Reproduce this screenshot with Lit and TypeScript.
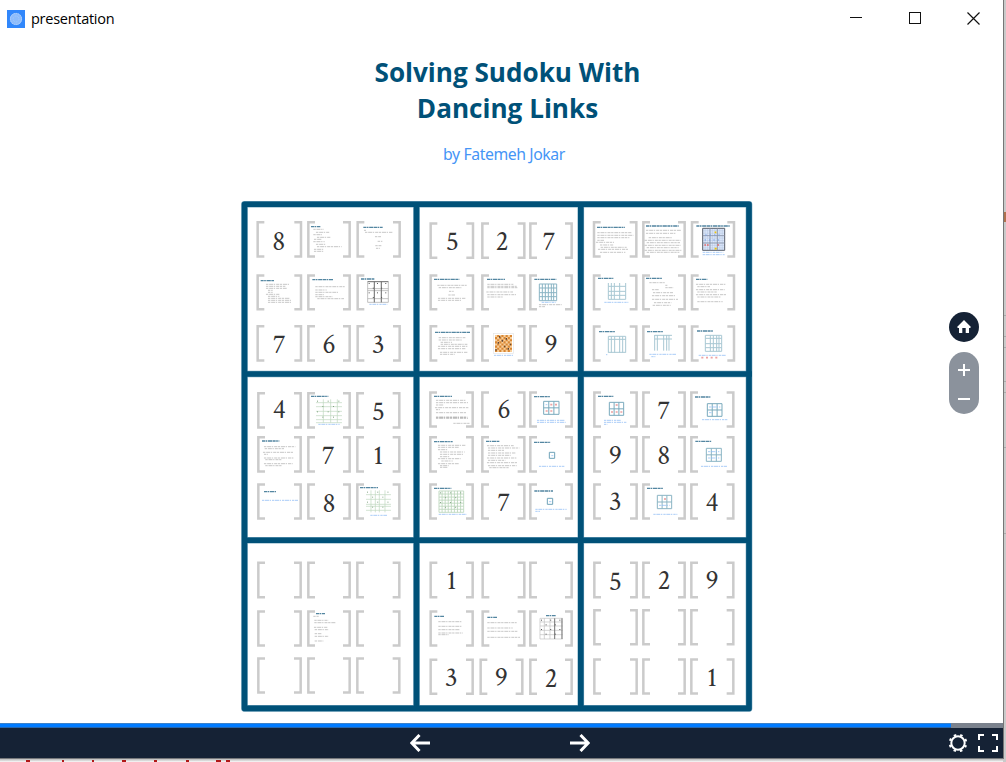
import { LitElement, html, svg, css } from "lit";
import { customElement, property } from "lit/decorators.js";

// Board geometry is expressed in thirds of a pixel, relative to each block's origin.
type Run = [number, number, number];
interface Mesh { x: number; y: number; w: number; h: number; cols: number; rows: number; color: string; bg?: string; sw?: number; vs?: number[]; hs?: number[]; dark?: string; }
interface Slide {
  digit?: [string, number, number];
  title?: Run;
  lines?: Run[];
  notes?: Run[];
  red?: Run[];
  mesh?: Mesh;
  marks?: string;
  chess?: [number, number, number];
}
interface Cell { x: number; y: number; w: number; h: number; s: Slide; }
interface Block { ox: number; oy: number; cells: Cell[]; }

const d = (n: string, x: number, y: number): Slide => ({ digit: [n, x, y] });
const E: Slide = {};
const TEAL = "#a9c8d3";
const GREEN = "#bcd6bc";

const cells = (cols: number[][], rows: number[][], slides: Slide[]): Cell[] =>
  slides.map((s, i) => {
    const [x0, x1] = cols[i % 3];
    const [y0, y1] = rows[Math.floor(i / 3)];
    return { x: x0, y: y0, w: x1 - x0, h: y1 - y0, s };
  });

const BLOCKS: Block[] = [
  { ox: 236, oy: 196, cells: cells([[61, 199], [213, 345], [361, 495]], [[75, 185], [235, 343], [387, 497]], [
    d("8", 128, 162),
    { title: [225, 92, 28], lines: [[232, 100, 32], [240, 109, 40], [232, 116, 26], [243, 124, 42], [234, 130, 24], [232, 137, 34], [240, 145, 30], [243, 152, 74], [234, 160, 30], [234, 166, 28]] },
    { title: [382, 94, 58], lines: [[384, 103, 6], [387, 109, 84], [417, 122, 18], [425, 136, 14], [418, 149, 18], [420, 157, 12]] },
    { title: [74, 254, 40], lines: [[90, 265, 72], [90, 271, 58], [90, 277, 62], [96, 283, 14], [96, 289, 14], [90, 295, 42], [96, 301, 34], [96, 307, 66], [96, 313, 72], [96, 319, 72]] },
    { title: [229, 251, 62], lines: [[238, 272, 88], [238, 282, 34], [238, 289, 68], [238, 296, 26], [238, 302, 52], [244, 308, 80]] },
    { title: [375, 249, 40], mesh: { x: 395, y: 257, w: 62, h: 62, cols: 3, rows: 3, color: "#b4b4b4", sw: 2.5, vs: [395, 415, 436, 457], hs: [257, 278, 284, 308, 319], dark: "M415 257v62M436 257v62M395 257h62" }, marks: "#555", notes: [[400, 325, 54]] },
    d("7", 130, 470), d("6", 279, 470), d("3", 427, 470),
  ]) },
  { ox: 410, oy: 196, cells: cells([[58, 193], [213, 347], [357, 489]], [[79, 189], [235, 343], [387, 497]], [
    d("5", 127, 163), d("2", 276, 162), d("7", 417, 162),
    { title: [72, 250, 76], lines: [[82, 268, 88], [86, 275, 68], [117, 286, 14], [115, 297, 20], [84, 307, 84], [84, 313, 70]] },
    { title: [231, 250, 54], lines: [[232, 265, 78], [232, 271, 88], [232, 275, 90], [229, 288, 80], [232, 296, 86], [232, 303, 46]] },
    { title: [373, 250, 66], mesh: { x: 388, y: 264, w: 52, h: 50, cols: 6, rows: 4, color: "#8bb5c4", vs: [388, 397, 406, 415, 424, 431, 440], hs: [264, 276, 290, 302, 314] }, notes: [[395, 319, 42]], lines: [[387, 326, 68], [387, 332, 18]] },
    { title: [75, 409, 106], lines: [[86, 425, 80], [86, 432, 72], [92, 439, 34], [92, 445, 80], [84, 451, 88], [84, 458, 84], [90, 469, 84], [90, 475, 44]] },
    { chess: [255, 417, 51], notes: [[252, 478, 58]] },
    d("9", 423, 470),
  ]) },
  { ox: 576, oy: 196, cells: cells([[50, 185], [198, 330], [344, 478]], [[75, 185], [235, 343], [388, 497]], [
    { title: [63, 94, 84], lines: [[64, 110, 102], [64, 118, 108], [64, 125, 96], [64, 133, 20], [60, 139, 54], [72, 147, 40], [74, 154, 78], [66, 160, 90], [72, 169, 76]] },
    { title: [210, 90, 98], lines: [[210, 103, 106], [210, 112, 88], [218, 125, 72], [206, 133, 108], [212, 140, 100], [206, 148, 108], [212, 155, 96], [206, 163, 110], [212, 169, 98]] },
    { title: [361, 90, 100], mesh: { x: 380, y: 97, w: 66, h: 66, cols: 9, rows: 9, color: "#b4c2dc", bg: "#dce8fc" }, notes: [[380, 169, 62], [380, 176, 66]] },
    { title: [66, 247, 46], mesh: { x: 97, y: 261, w: 52, h: 49, cols: 5, rows: 4, color: TEAL, vs: [97, 106, 115, 131, 149], hs: [271, 286, 298, 310] }, notes: [[85, 319, 72]] },
    { title: [210, 247, 48], lines: [[220, 260, 46], [268, 268, 6], [268, 275, 24], [228, 281, 20], [231, 290, 60], [228, 299, 70], [228, 310, 78], [234, 320, 52], [230, 328, 54]] },
    { title: [360, 250, 34], lines: [[360, 265, 88], [364, 272, 38], [360, 281, 86], [364, 288, 58], [360, 296, 90], [364, 303, 72], [364, 317, 76]] },
    { title: [69, 407, 48], mesh: { x: 97, y: 421, w: 52, h: 49, cols: 5, rows: 3, color: TEAL, vs: [97, 106, 116, 131, 140, 149], hs: [421, 430, 469] }, notes: [[90, 476, 4]] },
    { title: [213, 407, 48], mesh: { x: 236, y: 417, w: 52, h: 47, cols: 5, rows: 2, color: TEAL, vs: [236, 244, 263, 272, 279], hs: [418, 429] }, notes: [[220, 475, 80], [226, 482, 12]] },
    { title: [363, 405, 48], mesh: { x: 388, y: 418, w: 49, h: 48, cols: 5, rows: 4, color: TEAL, vs: [388, 403, 412, 422, 429, 437], hs: [418, 427, 443, 455, 466] }, notes: [[368, 478, 82]], red: [[376, 485, 52]] },
  ]) },
  { ox: 236, oy: 370, cells: cells([[63, 198], [213, 345], [360, 494]], [[66, 176], [198, 308], [340, 449]], [
    d("4", 130, 144),
    { title: [225, 79, 52], mesh: { x: 240, y: 88, w: 78, h: 70, cols: 6, rows: 7, color: GREEN, sw: 2, vs: [262, 284, 304], hs: [98, 110, 124, 137, 149, 158] }, marks: "#7fa27f", notes: [[247, 163, 64]] },
    d("5", 427, 151),
    { title: [78, 213, 52], lines: [[84, 230, 94], [86, 236, 58], [81, 247, 90], [84, 253, 12], [84, 264, 88], [88, 269, 48], [84, 281, 86], [88, 287, 50]] },
    d("7", 277, 282), d("1", 427, 282),
    { title: [84, 365, 36], notes: [[78, 391, 108]] },
    d("8", 279, 425),
    { title: [372, 353, 54], mesh: { x: 390, y: 361, w: 75, h: 66, cols: 6, rows: 6, color: GREEN, sw: 2, vs: [405, 418, 430, 447], hs: [374, 388, 403, 409, 421] }, marks: "#8aa98a", notes: [[403, 436, 50]] },
  ]) },
  { ox: 410, oy: 370, cells: cells([[57, 192], [213, 347], [357, 489]], [[64, 173], [198, 308], [340, 449]], [
    { title: [72, 79, 54], lines: [[78, 91, 88], [78, 98, 96], [78, 105, 22], [75, 113, 100], [78, 119, 12], [78, 128, 90], [78, 141, 94], [78, 143, 94], [78, 145, 96], [130, 160, 50]] },
    d("6", 282, 144),
    { title: [372, 80, 48], mesh: { x: 401, y: 94, w: 46, h: 39, cols: 3, rows: 2, color: "#79aabd" }, red: [[421, 104, 20], [407, 123, 20]], notes: [[407, 104, 5], [381, 151, 84], [381, 157, 86]] },
    { title: [72, 215, 56], lines: [[84, 226, 84], [84, 232, 62], [84, 239, 30], [90, 246, 74], [90, 253, 70], [90, 260, 28], [84, 266, 68], [94, 273, 34], [84, 281, 62], [90, 287, 26], [90, 292, 24]] },
    { title: [228, 214, 40], lines: [[231, 227, 80], [234, 234, 94], [234, 241, 48], [234, 249, 84], [234, 256, 68], [231, 264, 88], [234, 271, 52], [231, 278, 92], [234, 287, 86], [238, 293, 58]] },
    { title: [372, 217, 50], mesh: { x: 418, y: 247, w: 16, h: 18, cols: 1, rows: 1, color: "#6ea3b8" }, notes: [[424, 257, 6], [387, 289, 76]] },
    { title: [72, 355, 52], mesh: { x: 87, y: 363, w: 74, h: 64, cols: 8, rows: 7, color: GREEN, sw: 2.5 }, marks: "#8aa98a", notes: [[86, 433, 84]] },
    d("7", 281, 422),
    { title: [373, 363, 56], mesh: { x: 412, y: 385, w: 16, h: 18, cols: 1, rows: 1, color: "#6ea3b8" }, notes: [[417, 395, 7], [376, 418, 94], [376, 424, 14]] },
  ]) },
  { ox: 576, oy: 370, cells: cells([[51, 186], [198, 330], [342, 476]], [[64, 173], [198, 308], [340, 449]], [
    { title: [66, 79, 46], mesh: { x: 100, y: 97, w: 43, h: 39, cols: 3, rows: 2, color: "#79aabd" }, red: [[105, 126, 34], [119, 105, 6]], notes: [[84, 151, 50], [84, 157, 68], [84, 163, 10]] },
    d("7", 263, 148),
    { title: [357, 81, 46], mesh: { x: 394, y: 101, w: 44, h: 38, cols: 3, rows: 2, color: "#79aabd" }, notes: [[399, 111, 34], [399, 128, 10], [378, 149, 76]] },
    d("9", 118, 282), d("8", 263, 282),
    { title: [358, 214, 48], mesh: { x: 391, y: 235, w: 45, h: 39, cols: 3, rows: 2, color: "#8bb5c4" }, notes: [[396, 245, 34], [396, 264, 34], [375, 289, 78]] },
    d("3", 118, 420),
    { title: [213, 355, 48], mesh: { x: 244, y: 376, w: 43, h: 40, cols: 3, rows: 2, color: "#8bb5c4" }, red: [[264, 387, 8]], notes: [[249, 406, 32], [232, 433, 72]] },
    d("4", 408, 422),
  ]) },
  { ox: 236, oy: 536, cells: cells([[63, 198], [213, 345], [360, 494]], [[77, 187], [223, 332], [364, 473]], [
    E, E, E, E,
    { title: [240, 233, 27], lines: [[232, 241, 16], [235, 253, 42], [235, 260, 64], [234, 274, 42], [236, 281, 42], [236, 293, 20], [236, 301, 42], [236, 315, 26]] },
    E, E, E, E,
  ]) },
  { ox: 236, oy: 536, cells: [
    ...cells([[580, 714], [736, 869], [879, 1011]], [[77, 187], [223, 332]], [
      d("1", 647, 159), E, E,
      { title: [595, 241, 29], lines: [[607, 257, 70], [607, 271, 72], [607, 281, 64], [607, 291, 74], [607, 296, 32]] },
      { title: [754, 244, 29], lines: [[754, 260, 88], [754, 276, 76], [754, 286, 92], [754, 304, 98]] },
      { title: [930, 239, 29], mesh: { x: 912, y: 247, w: 68, h: 62, cols: 5, rows: 6, color: "#c0c0c0", sw: 2, vs: [912, 925, 942, 956, 978], hs: [247, 258, 270, 283, 296, 309], dark: "M956 247v62M978 247v62" }, marks: "#555" },
    ]),
    ...cells([[580, 714], [730, 863], [879, 1011]], [[368, 477]], [d("3", 646, 449), d("9", 796, 449), d("2", 945, 453)]),
  ] },
  { ox: 576, oy: 536, cells: cells([[51, 186], [198, 330], [342, 476]], [[77, 187], [219, 328], [367, 476]], [
    d("5", 118, 161), d("2", 264, 159), d("9", 408, 159), E, E, E, E, E, d("1", 408, 449),
  ]) },
];

@customElement("sudoku-board")
export class SudokuBoard extends LitElement {
  static styles = css`
    :host { display: block; width: 520px; height: 520px; }
    svg { display: block; }
    .frame { fill: none; stroke: #005178; stroke-width: 5.6; }
    .halo { fill: none; stroke: #7aa9c0; stroke-width: 6.6; }
    .bracket { fill: none; stroke: #cbcbcb; stroke-width: 7.5; }
    .digit { font-family: "Crimson Text", "Liberation Serif", serif; font-size: 83px; fill: #333; text-anchor: middle; }
    .title { stroke: #29688a; stroke-width: 4; stroke-dasharray: 9 1.5 5 2 13 1.5; opacity: .8; }
    .line { stroke: #8c8c8c; stroke-width: 2.4; stroke-dasharray: 7 2.5 12 2 4 3 9 2; opacity: .6; }
    .note { stroke: #8fbdf5; stroke-width: 3; stroke-dasharray: 7 2 12 2 4 3; opacity: .75; }
    .red { stroke: #e98b8b; stroke-width: 5; stroke-dasharray: 6 8; opacity: .8; }
  `;

  private bracket(c: Cell) {
    const l = c.x + 4, r = c.x + c.w - 4, t = c.y + 3.5, b = c.y + c.h - 3.5;
    return svg`<path class="bracket" d="M${l + 20} ${t}H${l}V${b}H${l + 20}M${r - 20} ${t}H${r}V${b}H${r - 20}"/>`;
  }

  private run(name: string, r: Run) {
    return svg`<path class=${name} d="M${r[0]} ${r[1]}h${r[2]}"/>`;
  }

  private mesh(m: Mesh) {
    const vs = m.vs ?? Array.from({ length: m.cols + 1 }, (_, i) => m.x + (m.w * i) / m.cols);
    const hs = m.hs ?? Array.from({ length: m.rows + 1 }, (_, i) => m.y + (m.h * i) / m.rows);
    const p = vs.map((v) => `M${v} ${m.y}v${m.h}`).join("") + hs.map((h) => `M${m.x} ${h}h${m.w}`).join("");
    return svg`<rect x=${m.x} y=${m.y} width=${m.w} height=${m.h} fill=${m.bg ?? "none"}/>
      <path d=${p} fill="none" stroke=${m.color} stroke-width=${m.bg ? 1.4 : m.sw ?? 3}/>
      ${m.dark ? svg`<path d=${m.dark} fill="none" stroke="#666" stroke-width="2.5"/>` : ""}
      ${m.bg ? svg`<path d="M${m.x} ${m.y}h${m.w}v${m.h}h${-m.w}z" fill="none" stroke="#60656f" stroke-width="3"/>
        <path d="M${m.x + m.w / 3} ${m.y}v${m.h}M${m.x + (m.w * 2) / 3} ${m.y}v${m.h}M${m.x} ${m.y + m.h / 3}h${m.w}M${m.x} ${m.y + (m.h * 2) / 3}h${m.w}" fill="none" stroke="#8b94a6" stroke-width="2.5"/>
        <path d="M${m.x + 36} ${m.y + 12}h5M${m.x + 36} ${m.y + 61}h6" stroke="#f0c400" stroke-width="5"/>
        <path d="M${m.x + 5} ${m.y + 50}h16M${m.x + 44} ${m.y + 50}h5" stroke="#e56a6a" stroke-width="4" stroke-dasharray="5 3"/>
        <path d="M${m.x + 8} ${m.y + 20}h50M${m.x + 6} ${m.y + 35}h50" stroke="#6f9de8" stroke-width="3" stroke-dasharray="4 9"/>` : ""}`;
  }

  private marks(m: Mesh, color: string) {
    const out = [];
    for (let r = 0; r < 8; r++)
      for (let c = 0; c < 9; c++)
        if ((r * 5 + c * 7 + r * c) % 4 === 0)
          out.push(svg`<rect x=${m.x + 3 + (c * (m.w - 6)) / 9} y=${m.y + 4 + (r * (m.h - 6)) / 8} width="3" height="3" fill=${color}/>`);
    return out;
  }

  private chess([x, y, s]: [number, number, number]) {
    const q = s / 8;
    let p = "";
    for (let r = 0; r < 8; r++) for (let c = 0; c < 8; c++) if ((r + c) % 2) p += `M${x + c * q} ${y + r * q}h${q}v${q}h${-q}z`;
    return svg`<rect x=${x - 4} y=${y - 5} width=${s + 8} height=${s + 10} fill="#fff" stroke="#e4e4e4" stroke-width="2"/>
      <rect x=${x} y=${y} width=${s} height=${s} fill="#f8cf9b"/><path d=${p} fill="#d98734"/>
      <path d="M${x + 14} ${y + 3}v5M${x + 34} ${y + 9}v5M${x + 10} ${y + 21}v5M${x + 22} ${y + 15}v5M${x + 46} ${y + 26}v5M${x + 29} ${y + 32}v5M${x + 3} ${y + 42}v5M${x + 40} ${y + 39}v5" stroke="#5c4638" stroke-width="4"/>`;
  }

  private cell(c: Cell) {
    const s = c.s;
    return svg`${this.bracket(c)}
      ${s.digit ? svg`<text class="digit" x=${s.digit[1]} y=${s.digit[2]}>${s.digit[0]}</text>` : ""}
      ${s.mesh ? this.mesh(s.mesh) : ""}
      ${s.mesh && s.marks ? this.marks(s.mesh, s.marks) : ""}
      ${s.chess ? this.chess(s.chess) : ""}
      ${s.title ? this.run("title", s.title) : ""}
      ${(s.lines ?? []).map((r) => this.run("line", r))}
      ${(s.notes ?? []).map((r) => this.run("note", r))}
      ${(s.red ?? []).map((r) => this.run("red", r))}`;
  }

  render() {
    const rules = "M8.5 8.3H513V512.4H8.5zM180.5 8V512M344.8 8V512M8 178H516M8 344.2H514";
    return html`<svg width="520" height="520" viewBox="236 196 520 520">
      <g transform="translate(236 196)" stroke-linejoin="round"><path class="halo" d=${rules}/><path class="frame" d=${rules}/></g>
      ${BLOCKS.map((b) => svg`<g transform="translate(${b.ox} ${b.oy}) scale(.33333)">${b.cells.map((c) => this.cell(c))}</g>`)}
    </svg>`;
  }
}

@customElement("app-root")
export class AppRoot extends LitElement {
  @property({ type: Number }) progress = 94.8;

  static styles = css`
    :host { display: flex; width: 1006px; height: 762px; overflow: hidden; background: #fff; }
    .window { display: flex; flex-direction: column; width: 1003px; height: 762px; }
    .titlebar { display: flex; align-items: center; height: 37px; padding: 0 23px 0 7px; box-sizing: border-box; flex: none; }
    .name { flex: 1; margin-left: 6px; font: 14.5px "Open Sans", sans-serif; letter-spacing: -.27px; color: #000; }
    .buttons { display: flex; gap: 45.5px; }
    .buttons svg { display: block; }
    .stage { position: relative; display: flex; flex-direction: column; align-items: center; height: 686px; }
    h1 { margin: 17px 0 0 12px; font: 700 26.1px/36px "Open Sans", sans-serif; color: #005178; text-align: center; white-space: nowrap; }
    .author { margin: 17px 0 0 5px; font: 15.8px/22px "Noto Sans", sans-serif; letter-spacing: -.42px; color: #4595f6; white-space: nowrap; }
    .board { margin: 31px 0 0 -11px; }
    .controls { position: absolute; right: 24px; top: 275px; display: flex; flex-direction: column; gap: 10px; }
    .controls svg { display: block; }
    .progress { height: 5px; background: #7b828d; flex: none; }
    .bar { height: 5px; box-sizing: border-box; background: #007bff; border-top: 1px solid #3a82cc; border-bottom: 1px solid #2866ab; }
    .nav { display: flex; height: 30px; background: #152235; flex: none; border-bottom: 1px solid #77797c; align-items: center; }
    .arrows { display: flex; gap: 140px; margin-left: 410px; flex: 1; }
    .tools { display: flex; gap: 10px; margin-right: 5px; }
    .nav svg { display: block; }
    .under { display: block; height: 3px; background: linear-gradient(#bcbcbc, #e4e4e4 70%, #fff); }
    .edge { width: 3px; height: 762px; }
  `;

  render() {
    return html`
      <div class="window">
        <header class="titlebar">
          <svg width="18" height="18" viewBox="0 0 18 18">
            <rect width="18" height="18" fill="#3187fb"/>
            <circle cx="9" cy="9" r="6.1" fill="#8dbcfb"/>
            <circle cx="9" cy="9" r="5.6" fill="none" stroke="#b2d2fc" stroke-dasharray="1.6 .7"/>
            <circle cx="9" cy="9" r="3" fill="none" stroke="#a5cbfc" stroke-dasharray="1 .8"/>
          </svg>
          <span class="name">presentation</span>
          <div class="buttons">
            <svg width="13" height="13" fill="none" stroke="#111"><path d="M0 5.5h12"/></svg>
            <svg width="13" height="13" fill="none" stroke="#111"><rect x=".5" y=".5" width="11" height="11"/></svg>
            <svg width="13" height="13" fill="none" stroke="#111" stroke-width="1.2"><path d="M.5 .5l12 12M12.5 .5l-12 12"/></svg>
          </div>
        </header>
        <main class="stage">
          <h1>Solving Sudoku With<br>Dancing Links</h1>
          <p class="author">by Fatemeh Jokar</p>
          <sudoku-board class="board"></sudoku-board>
          <div class="controls">
            <svg width="30" height="30"><circle cx="15" cy="15" r="15" fill="#152235"/><path d="M15 8l7 7-1 1h-1v5h-3.3v-5h-3.4v5H10v-5H9l-1-1z" fill="#fff"/></svg>
            <svg width="30" height="62"><rect width="30" height="62" rx="15" fill="#8b929c"/><path d="M9 18h12M15 12v12M9 47h12" stroke="#fff" stroke-width="2"/></svg>
          </div>
        </main>
        <div class="progress"><div class="bar" style="width:${this.progress}%"></div></div>
        <nav class="nav">
          <div class="arrows">
            <svg width="20" height="18" fill="none" stroke="#fff" stroke-width="3"><path d="M20 9H2M9.5 1L1.8 9l7.7 8"/></svg>
            <svg width="20" height="18" fill="none" stroke="#fff" stroke-width="3"><path d="M0 9h18M10.500 1l7.700 8-7.700 8"/></svg>
          </div>
          <div class="tools">
            <svg width="20" height="20" fill="none" stroke="#fff"><circle cx="10" cy="10" r="6.700" stroke-width="2"/><circle cx="10" cy="10" r="8.300" stroke-width="2" stroke-dasharray="2.600 3.918" stroke-dashoffset="1.300" transform="rotate(22.500 10 10)"/></svg>
            <svg width="20" height="20" fill="none" stroke="#fff" stroke-width="2"><path d="M1 7V2h5M14 2h5v5M19 13v5h-5M6 18H1v-5"/></svg>
          </div>
        </nav>
        <svg class="under" width="1003" height="3"><path d="M26 2h4M62 2h2M92 2h2M122 2h4M154 2h3M186 2h3M216 2h5M226 2h4" stroke="#b01818" stroke-width="2"/></svg>
      </div>
      <svg class="edge" width="3" height="762">
        <rect width="3" height="762" fill="#cacaca"/><path d="M.5 0v759" stroke="#767676"/>
        <path d="M1 315.500h2M1 336.500h2M1 347.500h2M1 381.500h2M1 392.500h2M1 447.500h2M1 533.500h2" stroke="#aaa"/>
        <path d="M2 212v10" stroke="#b0714e" stroke-width="2"/>
      </svg>`;
  }
}
